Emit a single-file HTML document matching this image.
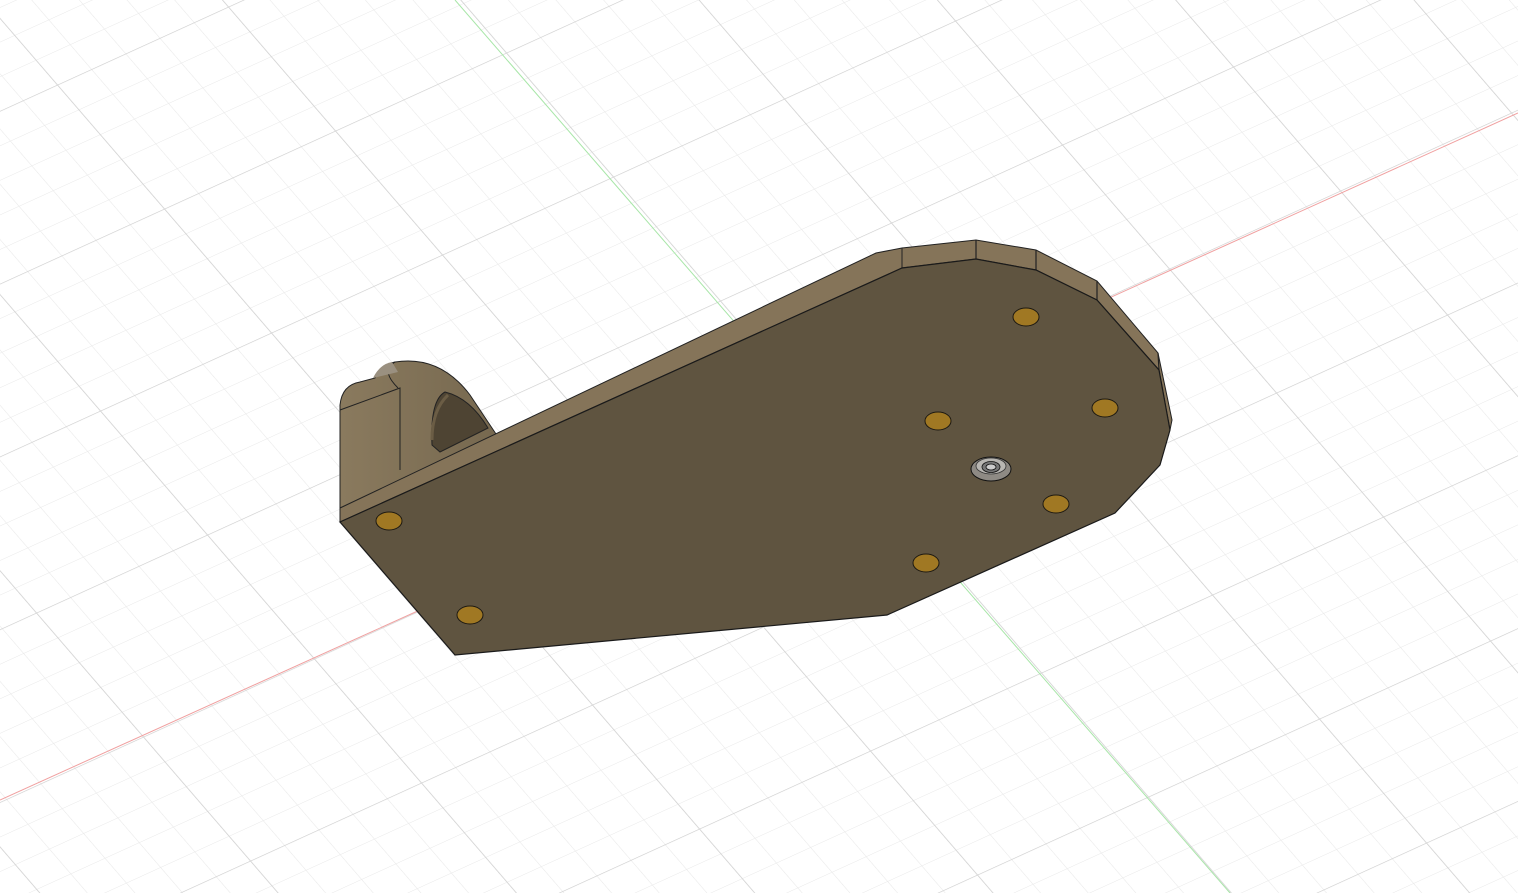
<!DOCTYPE html>
<html><head><meta charset="utf-8"><style>
html,body{margin:0;padding:0;background:#fff;width:1518px;height:893px;overflow:hidden}
svg{display:block}
</style></head><body>
<svg width="1518" height="893" viewBox="0 0 1518 893" xmlns="http://www.w3.org/2000/svg">
<defs>
<pattern id="minor" width="10" height="10" patternUnits="userSpaceOnUse" patternTransform="matrix(3.42 -1.56 2.14 2.48 1212 595)">
<path d="M0 0H10M0 0V10" stroke="#e8e8e8" stroke-width="0.3" fill="none"/>
</pattern>
<pattern id="major" width="50" height="50" patternUnits="userSpaceOnUse" patternTransform="matrix(3.42 -1.56 2.14 2.48 1212 595)">
<path d="M0 0H50M0 0V50" stroke="#d0d0d0" stroke-width="0.4" fill="none"/>
</pattern>
<linearGradient id="bk" x1="0" y1="0" x2="1" y2="0">
<stop offset="0" stop-color="#8a7a5e"/><stop offset="1" stop-color="#76684f"/>
</linearGradient>
</defs>
<rect width="1518" height="893" fill="#fff"/>
<rect width="1518" height="893" fill="url(#minor)"/>
<rect width="1518" height="893" fill="url(#major)"/>
<line x1="0" y1="800" x2="1518" y2="113" stroke="#f0a0a0" stroke-width="1"/>
<line x1="455" y1="0" x2="1230" y2="893" stroke="#a8e6a8" stroke-width="1"/>

<!-- bracket -->
<path d="M340 520 V405 Q342 385 360 382 L375 378 Q380 365 395 362 Q440 355 470 395 L500 440 L340 520 Z" fill="url(#bk)" stroke="#222" stroke-width="1"/>
<path d="M395 362 Q380 370 398 388" fill="none" stroke="#222" stroke-width="1"/>
<path d="M340 410 L400 388 L400 470" fill="none" stroke="#222" stroke-width="1"/>
<path d="M432 445 Q430 400 445 392 Q470 398 488 428 L440 452 Z" fill="#4e4433" stroke="#222" stroke-width="1"/>
<path d="M432 440 Q432 410 448 395" fill="none" stroke="#6b5d45" stroke-width="3"/>
<path d="M373 378 Q380 364 392 362 L398 372 Z" fill="#9a9080"/>

<!-- side strips -->
<polygon points="340,508 876,253 902,248 902,268 340,522" fill="#857459" stroke="#222" stroke-width="1"/>
<polygon points="902,248 976,240 1036,250 1097,281 1158,353 1172,420 1170,430 1159,370 1097,300 1036,270 976,259 902,268" fill="#857459" stroke="#222" stroke-width="1"/>
<path d="M976,240 V259 M1036,250 V270 M1097,281 V300 M1158,353 L1159,370" stroke="#222" stroke-width="1.2"/>

<!-- top face -->
<polygon points="340,522 902,268 976,259 1036,270 1097,300 1159,370 1170,430 1160,465 1115,513 887,615 455,655" fill="#5f5440" stroke="#1a1a1a" stroke-width="1.2"/>

<!-- holes -->
<g fill="#a07823" stroke="#1e1a12" stroke-width="1">
<ellipse cx="389" cy="521" rx="13" ry="9"/>
<ellipse cx="470" cy="615" rx="13" ry="9"/>
<ellipse cx="1026" cy="317" rx="13" ry="9"/>
<ellipse cx="938" cy="421" rx="13" ry="9"/>
<ellipse cx="1105" cy="408" rx="13" ry="9"/>
<ellipse cx="1056" cy="504" rx="13" ry="9"/>
<ellipse cx="926" cy="563" rx="13" ry="9"/>
</g>
<!-- screw -->
<ellipse cx="991" cy="469" rx="20" ry="12" fill="#8e8a84" stroke="#111" stroke-width="1"/>
<ellipse cx="991" cy="466" rx="15" ry="8" fill="#b8b6b2" stroke="#333" stroke-width="0.8"/>
<ellipse cx="991" cy="467" rx="9" ry="5.5" fill="#777" stroke="#111" stroke-width="0.8"/>
<ellipse cx="991" cy="467" rx="5" ry="3" fill="#ccc" stroke="#111" stroke-width="0.8"/>
</svg>
</body></html>
